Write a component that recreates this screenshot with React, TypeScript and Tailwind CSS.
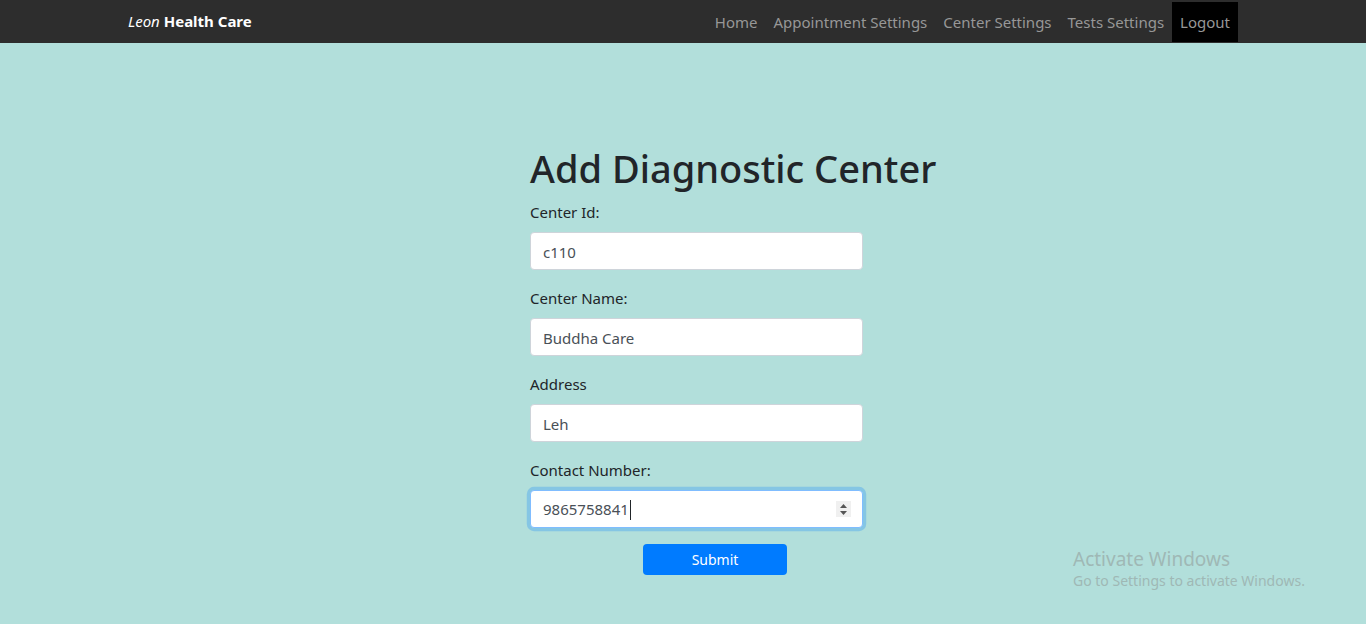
const fields = [
  { label: "Center Id:", value: "c110" },
  { label: "Center Name:", value: "Buddha Care" },
  { label: "Address", value: "Leh" },
];

const navLinks = ["Home", "Appointment Settings", "Center Settings", "Tests Settings"];

export default function App() {
  return (
    <div className="relative min-h-[624px] bg-[#b2dfdb] font-['Noto_Sans',sans-serif] text-[#212529]">
      {/* Navbar */}
      <nav className="h-[43px] bg-[#2d2d2d]">
        <div className="mx-auto flex h-full w-[1140px] items-center justify-between px-[15px]">
          <a className="text-[15px] text-white">
            <i>Leon</i> <b>Health Care</b>
          </a>
          <ul className="flex h-full items-center py-[2px]">
            {navLinks.map((l) => (
              <li key={l}>
                <a className="block px-2 text-[15px] leading-[40px] text-[#979797]">{l}</a>
              </li>
            ))}
            <li>
              <a className="block bg-black px-2 text-[15px] leading-[40px] text-[#979797]">Logout</a>
            </li>
          </ul>
        </div>
      </nav>

      {/* Form */}
      <div className="mx-auto w-[1140px] px-[15px] pt-[101px]">
        <div className="ml-[402px] w-[370px]">
          <h1 className="mb-2 whitespace-nowrap text-[38px] font-medium leading-[48px]">
            Add Diagnostic Center
          </h1>
          {fields.map((f) => (
            <div key={f.label} className="mb-4">
              <label className="mb-2 block text-[15px] leading-6">{f.label}</label>
              <input
                readOnly
                value={f.value}
                className="block h-[38px] w-[333px] rounded border border-[#ced4da] bg-white px-3 pt-px text-[15px] text-[#495057] outline-none"
              />
            </div>
          ))}
          <div className="mb-4">
            <label className="mb-2 block text-[15px] leading-6">Contact Number:</label>
            <div className="relative flex h-[38px] w-[333px] items-center rounded border border-[#80bdff] bg-white px-3 pt-px text-[15px] text-[#495057] shadow-[0_0_0_3.2px_rgba(0,123,255,0.25)]">
              <span>9865758841</span>
              <span className="ml-px h-[20px] w-px bg-[#212529]" />
              <span className="absolute right-[11px] top-[10px] flex h-[16px] w-[15px] flex-col items-center justify-center gap-[3px] bg-[#f0f0f0]">
                <svg width="7" height="4" viewBox="0 0 7 4"><path d="M3.5 0L7 4H0z" fill="#555" /></svg>
                <svg width="7" height="4" viewBox="0 0 7 4"><path d="M0 0h7L3.5 4z" fill="#555" /></svg>
              </span>
            </div>
          </div>
          <button className="ml-[113px] h-[31px] w-[144px] rounded bg-[#007bff] text-[14px] text-white">
            Submit
          </button>
        </div>
      </div>

      {/* Windows watermark */}
      <div className="absolute left-[1073px] top-[546px] text-[#9fb8b5]">
        <div className="text-[19px] leading-[26px]">Activate Windows</div>
        <div className="text-[14px] leading-[18px]">Go to Settings to activate Windows.</div>
      </div>
    </div>
  );
}
